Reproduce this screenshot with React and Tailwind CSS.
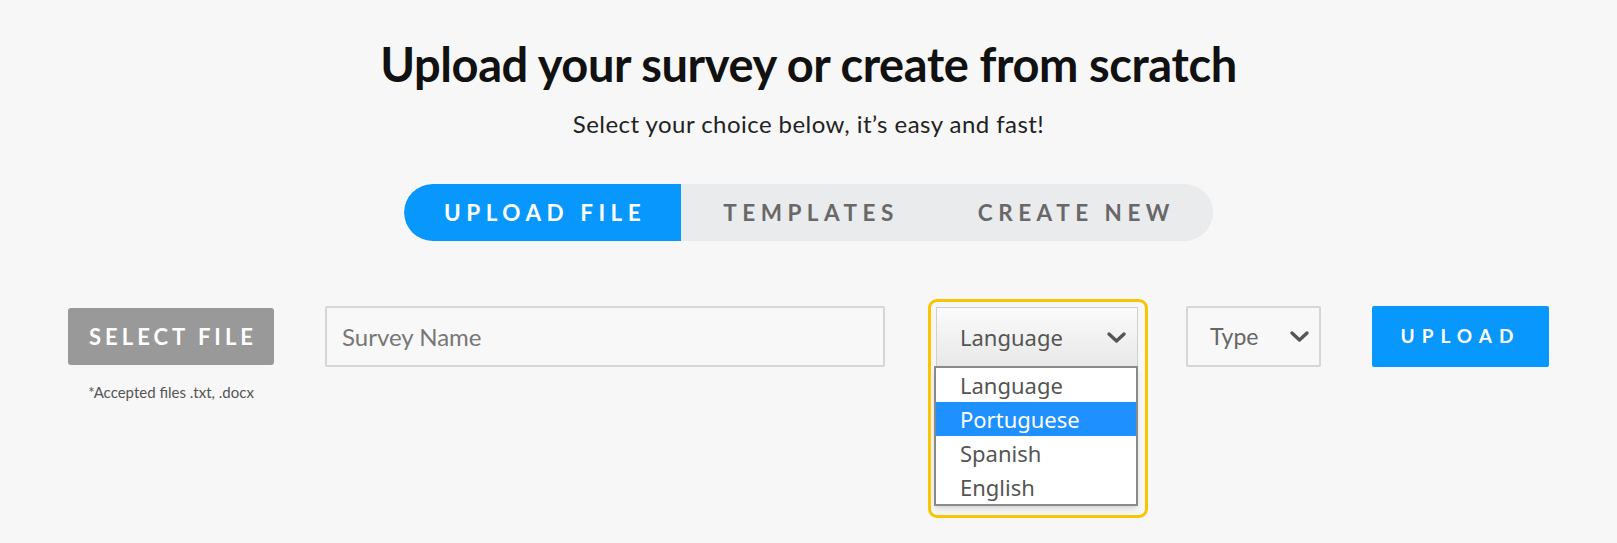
import React from "react";

const Chevron = () => (
  <svg width="21" height="13" viewBox="0 0 21 13" fill="none">
    <polyline points="3,3 10.5,10 18,3" stroke="#555" strokeWidth="3.4" strokeLinecap="round" strokeLinejoin="round" />
  </svg>
);

export default function App() {
  const sans = { fontFamily: "Lato, 'Noto Sans', sans-serif" };
  const sys = { fontFamily: "'Noto Sans', sans-serif" };
  return (
    <div className="w-full h-[543px] bg-[#f7f7f7] overflow-hidden" style={sans}>
      <div className="w-full flex flex-col items-center pt-[36px]">
        <h1 className="text-[47px] leading-[56px] font-bold text-[#111] tracking-[-0.4px]">
          Upload your survey or create from scratch
        </h1>
        <p className="mt-[18px] text-[24px] leading-[28px] text-[#222] tracking-[0.45px]">
          Select your choice below, it’s easy and fast!
        </p>

        <div className="mt-[46px] flex h-[57px] rounded-full bg-[#eaebed] overflow-hidden">
          <div className="flex items-center pl-[40px] pr-[35px] bg-[#0897fc] text-white font-bold text-[22.5px] tracking-[5.5px] rounded-l-full">
            UPLOAD FILE
          </div>
          <div className="flex items-center pl-[42px] pr-[38px] text-[#686868] font-bold text-[22.5px] tracking-[5.5px]">
            TEMPLATES
          </div>
          <div className="flex items-center pl-[41px] pr-[38px] text-[#686868] font-bold text-[22.5px] tracking-[5.5px]">
            CREATE NEW
          </div>
        </div>

        <div className="mt-[65px] w-full flex justify-center items-start">
          <div className="flex flex-col items-center w-[206px] mt-[2px]">
            <div className="w-[206px] h-[57px] bg-[#999] rounded-[3px] flex items-center justify-center pl-[4px] text-white text-[22px] tracking-[4px] font-bold">
              SELECT FILE
            </div>
            <div className="mt-[18px] text-[15px] leading-[18px] text-[#555]">
              *Accepted files .txt, .docx
            </div>
          </div>

          <div className="ml-[51px] w-[560px] h-[61px] border-2 border-[#d6d6d6] bg-[#f8f8f8] rounded-[2px] flex items-center pl-[15px] text-[24px] text-[#777]">
            Survey Name
          </div>

          <div className="relative ml-[51px] mt-[1px] w-[202px] h-[60px]">
            <div className="w-full h-full border border-[#d0d0d0] bg-gradient-to-b from-[#fbfbfb] to-[#e8e8e8] flex items-center pl-[23px] pr-[10px] text-[22px] text-[#555]" style={sys}>
              <span className="flex-1">Language</span>
              <Chevron />
            </div>
            <div className="absolute left-[-2px] top-[59px] w-[204px] border-[2px] border-[#8a8a8a] bg-white shadow-md text-[22px] text-[#555]" style={sys}>
              <div className="h-[34px] flex items-center pl-[24px]">Language</div>
              <div className="h-[34px] flex items-center pl-[24px] bg-[#1e90ff] text-white">Portuguese</div>
              <div className="h-[34px] flex items-center pl-[24px]">Spanish</div>
              <div className="h-[34px] flex items-center pl-[24px]">English</div>
            </div>
            <div className="absolute left-[-8px] top-[-8px] w-[220px] h-[219px] border-[3px] border-[#fbc400] rounded-[9px] pointer-events-none"></div>
          </div>

          <div className="ml-[48px] w-[135px] h-[61px] border-2 border-[#d6d6d6] bg-[#f8f8f8] rounded-[2px] flex items-center pl-[22px] pr-[9px] text-[23px] text-[#666]">
            <span className="flex-1">Type</span>
            <Chevron />
          </div>

          <div className="ml-[51px] w-[177px] h-[61px] bg-[#0897fc] rounded-[2px] flex items-center justify-center text-white font-bold text-[19px] tracking-[7px]">
            UPLOAD
          </div>
        </div>
      </div>
    </div>
  );
}
